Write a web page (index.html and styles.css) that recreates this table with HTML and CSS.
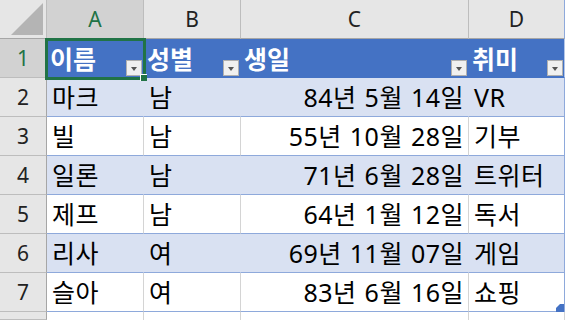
FILE: index.html
```html
<!DOCTYPE html>
<html lang="ko">
<head>
  <meta charset="UTF-8" />
  <title>취미 목록</title>
  <link rel="stylesheet" href="styles.css">
</head>
<body>
  <div class="sheet">
    <div class="corner"><span class="tri"></span></div>
    <div class="hd sel">A</div>
    <div class="hd">B</div>
    <div class="hd">C</div>
    <div class="hd last">D</div>

    <div class="rh sel">1</div>
    <div class="th"><span>이름</span><i class="flt"></i></div>
    <div class="th"><span>성별</span><i class="flt"></i></div>
    <div class="th"><span>생일</span><i class="flt"></i></div>
    <div class="th last"><span>취미</span><i class="flt"></i></div>

    <div class="rh">2</div>
    <div class="c band">마크</div>
    <div class="c band">남</div>
    <div class="c band num">84년 5월 14일</div>
    <div class="c band last">VR</div>

    <div class="rh">3</div>
    <div class="c">빌</div>
    <div class="c">남</div>
    <div class="c num">55년 10월 28일</div>
    <div class="c last">기부</div>

    <div class="rh">4</div>
    <div class="c band">일론</div>
    <div class="c band">남</div>
    <div class="c band num">71년 6월 28일</div>
    <div class="c band last">트위터</div>

    <div class="rh">5</div>
    <div class="c">제프</div>
    <div class="c">남</div>
    <div class="c num">64년 1월 12일</div>
    <div class="c last">독서</div>

    <div class="rh">6</div>
    <div class="c band">리사</div>
    <div class="c band">여</div>
    <div class="c band num">69년 11월 07일</div>
    <div class="c band last">게임</div>

    <div class="rh">7</div>
    <div class="c">슬아</div>
    <div class="c">여</div>
    <div class="c num">83년 6월 16일</div>
    <div class="c last">쇼핑</div>

    <div class="rh"></div>
    <div class="e"></div>
    <div class="e"></div>
    <div class="e"></div>
    <div class="e"></div>

    <div class="selection"><span class="handle"></span></div>
    <div class="resize"></div>
  </div>
</body>
</html>
```

FILE: styles.css
```css
* {
    box-sizing: border-box;
    margin: 0;
    padding: 0;
}

body {
    width: 565px;
    height: 320px;
    overflow: hidden;
    background: #fff;
    font-family: "Noto Sans", "Noto Sans CJK KR", sans-serif;
}

.sheet {
    position: relative;
    display: grid;
    grid-template-columns: 47px 97px 97px 228px 96px;
    grid-template-rows: repeat(8, 39px) 1fr;
    width: 565px;
    height: 320px;
}

/* column / row headers */
.corner {
    position: relative;
    background: #e6e6e6;
    border-right: 1px solid #bdbdbd;
    border-bottom: 1px solid #a6a6a6;
}

.corner .tri {
    position: absolute;
    right: 3px;
    bottom: 3px;
    width: 32px;
    height: 32px;
    background: #b4b4b4;
    clip-path: polygon(100% 0, 100% 100%, 0 100%);
}

.hd {
    display: flex;
    justify-content: center;
    align-items: center;
    background: #e6e6e6;
    border-right: 1px solid #bdbdbd;
    border-bottom: 1px solid #a6a6a6;
    font-size: 21px;
    color: #222;
}

.rh {
    display: flex;
    justify-content: center;
    align-items: center;
    background: #e6e6e6;
    border-right: 1px solid #a6a6a6;
    border-bottom: 1px solid #bdbdbd;
    font-size: 21px;
    color: #222;
}

.hd.sel,
.rh.sel {
    background: #d2d2d2;
    color: #217346;
}

/* table */
.th {
    display: flex;
    justify-content: space-between;
    align-items: flex-end;
    background: #4472c4;
    border-right: 1px solid #4472c4;
    border-bottom: 1px solid #4472c4;
    padding: 0 1px 1px 3px;
    color: #fff;
    font-weight: bold;
    font-size: 25px;
}

.th span {
    line-height: 34px;
}

.flt {
    position: relative;
    width: 16px;
    height: 16px;
    background: #f0f0f0;
    border: 1px solid #b0b0b0;
}

.flt::after {
    content: "";
    position: absolute;
    left: 4px;
    top: 6px;
    border-left: 3px solid transparent;
    border-right: 3px solid transparent;
    border-top: 4px solid #555;
}

.c {
    display: flex;
    align-items: flex-end;
    padding: 0 4px 3px 5px;
    background: #fff;
    border-right: 1px solid #d4d4d4;
    border-bottom: 1px solid #8ea9db;
    font-size: 25px;
    letter-spacing: 0.5px;
    line-height: 32px;
    color: #000;
    white-space: nowrap;
}

.c.band {
    background: #d9e1f2;
    border-right-color: #d9e1f2;
}

.c.num {
    justify-content: flex-end;
    word-spacing: 1px;
}

.last,
.c.band.last {
    border-right-color: #8ea9db;
}

.th.last {
    border-right-color: #b4c6e7;
}

.e {
    border-right: 1px solid #d4d4d4;
}

/* overlays */
.selection {
    position: absolute;
    left: 45px;
    top: 38px;
    width: 101px;
    height: 42px;
    border: 3px solid #217346;
}

.selection .handle {
    position: absolute;
    right: -4px;
    bottom: -4px;
    width: 7px;
    height: 7px;
    background: #217346;
    border-left: 1px solid #fff;
    border-top: 1px solid #fff;
}

.resize {
    position: absolute;
    left: 556px;
    top: 304px;
    width: 8px;
    height: 8px;
    background: #4472c4;
    clip-path: polygon(50% 0, 100% 0, 100% 100%, 0 100%, 0 50%);
}
```
